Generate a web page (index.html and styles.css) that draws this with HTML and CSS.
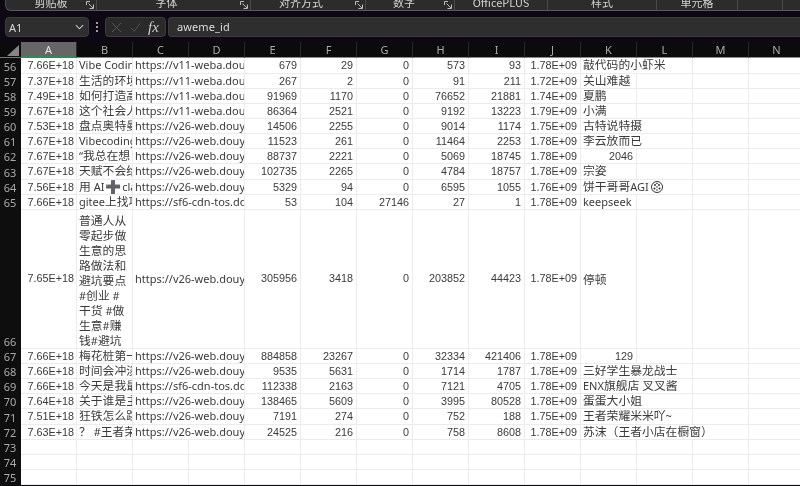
FILE: index.html
```html
<!DOCTYPE html>
<html lang="zh">
<head>
<meta charset="utf-8">
<title>Sheet</title>
<link rel="stylesheet" href="styles.css">
</head>
<body>
<div class="app">
  <div class="ribbon">
    <div class="rgroup w-clip"><span class="rlabel">剪贴板</span><svg class="launch" viewBox="0 0 8 8"><path d="M.5 4V.5H4M2.500 2.500l4.500 4.500M7.500 3.500v4h-4"/></svg></div>
    <div class="rgroup w-font"><span class="rlabel">字体</span><svg class="launch" viewBox="0 0 8 8"><path d="M.5 4V.5H4M2.500 2.500l4.500 4.500M7.500 3.500v4h-4"/></svg></div>
    <div class="rgroup w-align"><span class="rlabel">对齐方式</span><svg class="launch" viewBox="0 0 8 8"><path d="M.5 4V.5H4M2.500 2.500l4.500 4.500M7.500 3.500v4h-4"/></svg></div>
    <div class="rgroup w-num"><span class="rlabel">数字</span><svg class="launch" viewBox="0 0 8 8"><path d="M.5 4V.5H4M2.500 2.500l4.500 4.500M7.500 3.500v4h-4"/></svg></div>
    <div class="rgroup w-office"><span class="rlabel">OfficePLUS</span></div>
    <div class="rgroup w-style"><span class="rlabel">样式</span></div>
    <div class="rgroup w-cell"><span class="rlabel">单元格</span></div>
    <div class="rgroup w-more"></div>
    <div class="rgroup w-rest"></div>
  </div>
  <div class="fbar">
    <div class="namebox"><span>A1</span><svg class="chev" viewBox="0 0 10 6"><path d="M1 1l4 4 4-4"/></svg></div>
    <div class="dots"><i></i><i></i><i></i></div>
    <div class="fbtns">
      <svg class="x" viewBox="0 0 12 12"><path d="M1 1l10 10M11 1L1 11"/></svg>
      <svg class="x" viewBox="0 0 13 12"><path d="M1 6.500l4 4L12 1"/></svg>
      <span class="fx">fx</span>
    </div>
    <div class="finput">aweme_id</div>
  </div>
  <div id="sheet" class="sheet"></div>
</div>
<script src="sheet.js"></script>
</body>
</html>
```
FILE: styles.css
```css
* { box-sizing: border-box; }
html, body { margin: 0; padding: 0; background: #0a0a0c; overflow: hidden; }
.app { width: 800px; height: 486px; overflow: hidden; display: flex; flex-direction: column; background: #0e0814; filter: blur(0.35px); font-family: "Noto Sans", "Noto Sans CJK SC", sans-serif; }

.ribbon { width: 795px; height: 11px; flex: none; display: flex; background: #2c2c2c; border-bottom: 1px solid #5a5a5a; border-left: 1px solid #4a4a4a; border-radius: 0 0 0 6px; margin-left: 5px; color: #d4d4d4; font-size: 11px; font-family: "Noto Sans CJK SC", sans-serif; overflow: hidden; }
.rgroup { position: relative; flex: none; display: flex; justify-content: center; border-right: 1px solid #4a4a4a; height: 10px; }
.rlabel { line-height: 11px; margin-top: -3px; white-space: nowrap; height: 13px; }
.launch { position: absolute; right: 2px; top: 1px; width: 8px; height: 8px; fill: none; stroke: #bdbdbd; stroke-width: 1; }
.w-clip { width: 91px; }
.w-font { width: 154px; padding-right: 14px; }
.w-align { width: 115px; padding-right: 14px; }
.w-num { width: 89px; padding-right: 12px; }
.w-office { width: 93px; }
.w-style { width: 109px; }
.w-cell { width: 81px; }
.w-more { width: 45px; }
.w-rest { width: 17px; border-right: 0; }

.fbar { height: 31px; flex: none; display: flex; align-items: flex-start; padding: 6px 0 0 5px; background: #0e0814; }
.namebox { width: 84px; height: 20px; background: #2e2e2e; border: 1px solid #3d3d3d; border-radius: 4px; display: flex; align-items: center; justify-content: space-between; padding: 0 4px 0 3px; color: #d8d8d8; font-size: 11px; }
.chev { width: 9px; height: 6px; fill: none; stroke: #c8c8c8; stroke-width: 1.200; }
.dots { width: 16px; height: 20px; display: flex; flex-direction: column; align-items: center; justify-content: center; gap: 2px; }
.dots i { width: 2px; height: 2px; background: #cfcfcf; border-radius: 50%; }
.fbtns { width: 61px; height: 20px; background: #2a2a2a; border: 1px solid #3d3d3d; border-radius: 4px; display: flex; align-items: center; gap: 8px; padding: 0 3px 0 5px; }
.x { width: 11px; height: 11px; fill: none; stroke: #5e5e5e; stroke-width: 1; flex: none; }
.fx { font-family: "Liberation Serif", serif; font-style: italic; font-size: 15px; color: #cdcdcd; line-height: 1; margin-left: -1px; }
.finput { flex: 1; height: 20px; margin-left: 2px; background: #2e2e2e; border: 1px solid #3d3d3d; border-right: 0; border-radius: 4px 0 0 4px; color: #dcdcdc; font-size: 11px; line-height: 18px; padding-left: 8px; letter-spacing: 0.1px; }

.sheet { flex: none; display: grid; width: 805px; grid-template-columns: 21px repeat(14, 56px); grid-template-rows: 16.400px repeat(10, 15.150px) 139px repeat(9, 15.150px); color: #3a3a3a; background: #fff; font-size: 11px; }
.corner { background: #0b0b0b; position: relative; border-bottom: 1px solid #777; }
.corner::after { content: ""; position: absolute; right: 2px; bottom: 1px; border-style: solid; border-width: 0 0 11px 12px; border-color: transparent transparent #868686 transparent; }
.ch { background: #0b0b0b; color: #a9a9a9; border-right: 1px solid #2a2a2a; border-bottom: 1px solid #8a8a8a; text-align: center; line-height: 15px; }
.ch.sel { background: #666; color: #e8e8e8; border-bottom: 2px solid #2f8a55; }
.rh { background: #0e0e0e; color: #aaa; line-height: 15px; display: flex; align-items: flex-end; justify-content: center; padding-right: 1px; font-size: 11px; }
.c { border-right: 1px solid #ececec; border-bottom: 1px solid #ececec; white-space: nowrap; overflow: hidden; padding: 0 0 0 2px; line-height: 14px; background: #fff; }
.c.n { text-align: right; padding: 0 3px 0 0; line-height: 15px; font-family: "Liberation Sans", sans-serif; font-size: 10.800px; }
.c.first { padding-right: 2px; }
.tall { display: flex; align-items: center; }
.tall.n { justify-content: flex-end; }
.tallb { white-space: normal; line-height: 15px; padding-top: 3px; }
.span2 { grid-column: span 2; }
.span3 { grid-column: span 3; }
.cjk { font-size: 11.800px; line-height: 1; font-family: "Noto Sans CJK SC", sans-serif; }
.ico { display: inline-block; width: 12px; height: 12px; margin-left: 2px; vertical-align: -2px; }
.ico circle { fill: none; stroke: #333; stroke-width: 1; }
.ico .d { fill: #333; stroke: none; }
.plus { font-family: "DejaVu Sans", sans-serif; font-size: 13px; line-height: 1; color: #000; margin: 0 -2px 0 -2px; -webkit-text-stroke: 0.3px #000; }
```
FILE: sheet.js
```js
var cols = ['A','B','C','D','E','F','G','H','I','J','K','L','M','N'];
var v11 = 'https://v11-weba.dou';
var v26 = 'https://v26-web.douy';
var sf6 = 'https://sf6-cdn-tos.do';
var face = '<svg class="ico" viewBox="0 0 12 12"><circle cx="6" cy="6" r="5.500"/><circle class="d" cx="4" cy="4" r="1"/><circle class="d" cx="8" cy="4" r="1"/><circle class="d" cx="6" cy="2.500" r=".8"/><circle class="d" cx="3.500" cy="7.500" r="1"/><circle class="d" cx="8.500" cy="7.500" r="1"/><circle class="d" cx="6" cy="6" r=".8"/><circle class="d" cx="6" cy="9" r=".8"/></svg>';
var rows = [
 [56,'7.66E+18','Vibe Codin',v11,679,29,0,573,93,'1.78E+09','敲代码的小虾米'],
 [57,'7.37E+18','生活的环境',v11,267,2,0,91,211,'1.72E+09','关山难越'],
 [58,'7.49E+18','如何打造高',v11,91969,1170,0,76652,21881,'1.74E+09','夏鹏'],
 [59,'7.67E+18','这个社会人',v11,86364,2521,0,9192,13223,'1.79E+09','小满'],
 [60,'7.53E+18','盘点奥特曼',v26,14506,2255,0,9014,1174,'1.75E+09','古特说特摄'],
 [61,'7.67E+18','Vibecoding',v26,11523,261,0,11464,2253,'1.78E+09','李云放而已'],
 [62,'7.67E+18','“我总在想',v26,88737,2221,0,5069,18745,'1.78E+09',2046],
 [63,'7.67E+18','天赋不会给',v26,102735,2265,0,4784,18757,'1.78E+09','宗姿'],
 [64,'7.56E+18','用 AI ➕ cla',v26,5329,94,0,6595,1055,'1.76E+09','饼干哥哥AGI'],
 [65,'7.66E+18','gitee上找项',sf6,53,104,27146,27,1,'1.78E+09','keepseek'],
 [66,'7.65E+18','普通人从<br>零起步做<br>生意的思<br>路做法和<br>避坑要点<br>#创业 #<br>干货 #做<br>生意#赚<br>钱#避坑',v26,305956,3418,0,203852,44423,'1.78E+09','停顿'],
 [67,'7.66E+18','梅花桩第一',v26,884858,23267,0,32334,421406,'1.78E+09',129],
 [68,'7.66E+18','时间会冲淡',v26,9535,5631,0,1714,1787,'1.78E+09','三好学生暴龙战士'],
 [69,'7.66E+18','今天是我最',sf6,112338,2163,0,7121,4705,'1.78E+09','ENX旗舰店 叉叉酱'],
 [70,'7.64E+18','关于谁是主',v26,138465,5609,0,3995,80528,'1.78E+09','蛋蛋大小姐'],
 [71,'7.51E+18','狂铁怎么跳',v26,7191,274,0,752,188,'1.75E+09','王者荣耀米米吖~'],
 [72,'7.63E+18','？ #王者荣',v26,24525,216,0,758,8608,'1.78E+09','苏沫（王者小店在橱窗）'],
 [73],[74],[75]
];
function markup(s) {
  return String(s)
    .replace(/[\u3000-\u9fff\uff00-\uffef]+/g, '<span class="cjk">$&</span>')
    .replace('➕', '<span class="plus">➕</span>');
}
function cell(cls, t) { return '<div class="' + cls + '">' + t + '</div>'; }
var h = '<div class="corner"></div>';
cols.forEach(function (c, i) { h += '<div class="ch' + (i === 0 ? ' sel' : '') + '">' + c + '</div>'; });
rows.forEach(function (r) {
  var tall = r[0] === 66 ? ' tall' : '';
  h += '<div class="rh">' + r[0] + '</div>';
  if (r.length === 1) { for (var k = 0; k < 14; k++) h += cell('c', ''); return; }
  var name = r[10], used = 3;
  h += cell('c n first' + tall, r[1]);
  h += cell('c' + tall + (tall ? ' tallb' : ''), tall ? '<div>' + markup(r[2]) + '</div>' : markup(r[2]));
  h += cell('c span2' + tall, r[3]);
  for (var i = 4; i <= 9; i++) h += cell('c n' + tall, r[i]);
  if (typeof name === 'number') {
    h += cell('c n', name);
    used = 1;
  } else {
    var w = 4 + name.replace(/[\u3000-\u9fff\uff00-\uffef]/g, 'xx').length * 6;
    if (name.indexOf('AGI') >= 0) w += 14;
    used = Math.ceil(w / 56);
    h += cell('c' + tall + (used > 1 ? ' span' + used : ''), markup(name) + (name.indexOf('AGI') >= 0 ? face : ''));
  }
  for (var j = used; j < 4; j++) h += cell('c', '');
});
document.getElementById('sheet').innerHTML = h;
```
